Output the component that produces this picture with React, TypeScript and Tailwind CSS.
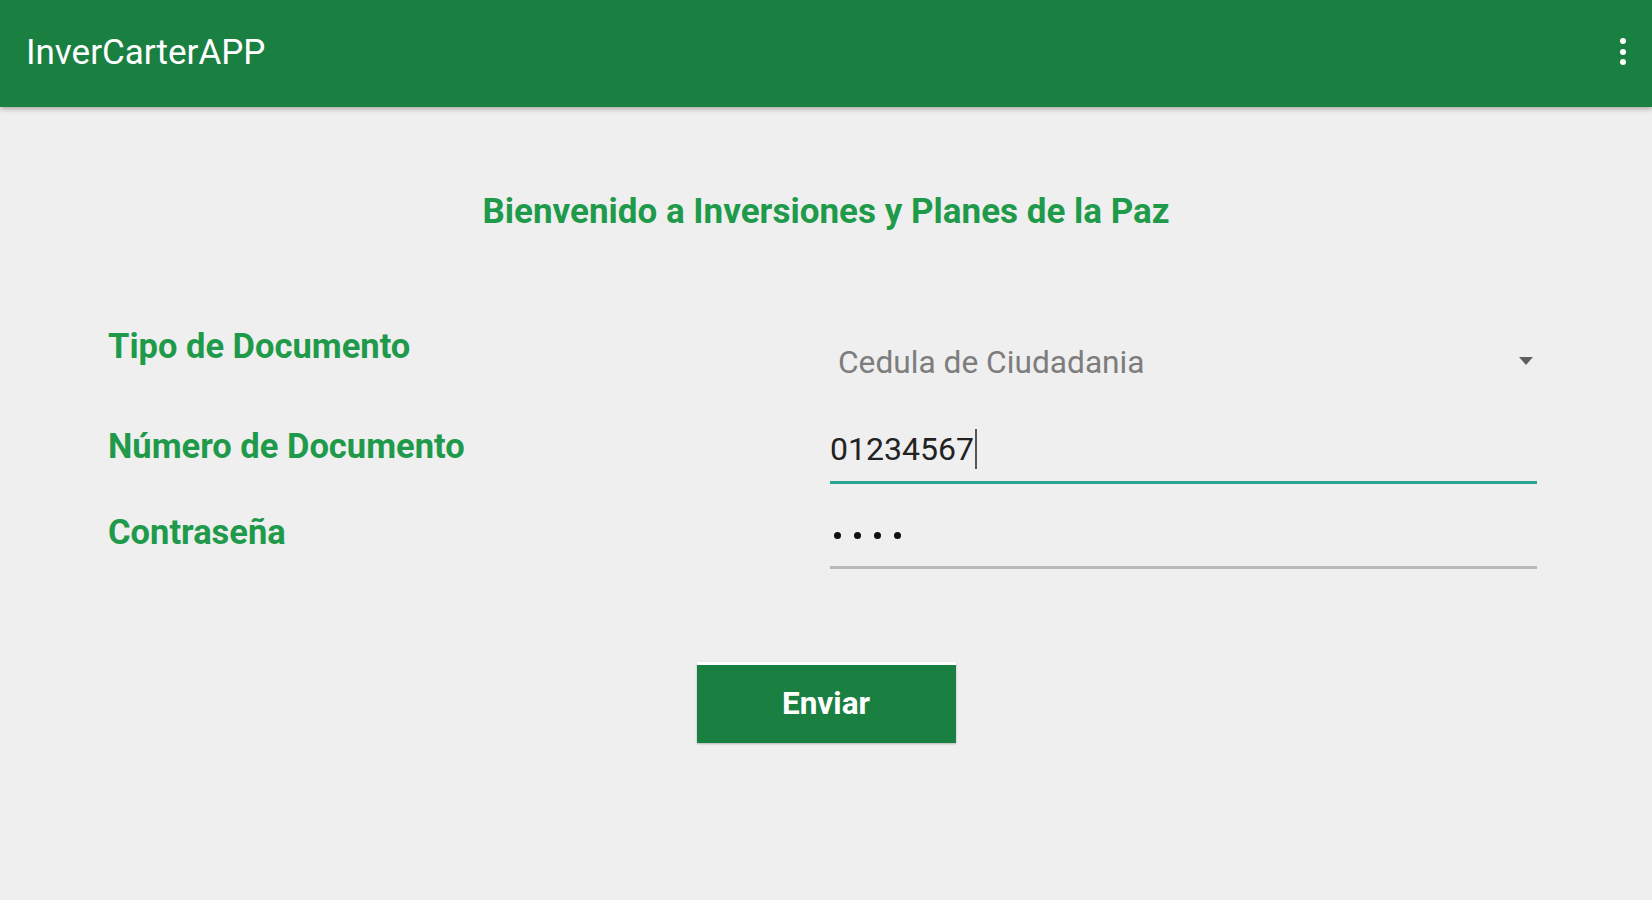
import React from 'react';

const font = 'font-["Roboto","Liberation_Sans",sans-serif]';

function Header() {
  return (
    <header className="h-[107px] bg-[#198042] flex items-center justify-between pl-[26px] pr-[26px] pb-[4px] shadow-[0_2px_5px_rgba(0,0,0,0.3)] relative z-10">
      <h1 className="text-[35px] leading-[40px] mt-[3px] text-white">InverCarterAPP</h1>
      <div className="flex flex-col gap-[4.5px]">
        <span className="w-[6px] h-[6px] rounded-full bg-white" />
        <span className="w-[6px] h-[6px] rounded-full bg-white" />
        <span className="w-[6px] h-[6px] rounded-full bg-white" />
      </div>
    </header>
  );
}

function Label({ children }: { children: React.ReactNode }) {
  return <div className="text-[34.5px] leading-[40px] font-bold text-[#1f9a4b]">{children}</div>;
}

export default function App() {
  return (
    <div className={`${font} min-h-[900px] bg-[#efefef]`}>
      <Header />

      <main className="pt-[85px]">
        <h2 className="text-center text-[35px] leading-[40px] font-bold text-[#1f9a4b]">
          Bienvenido a Inversiones y Planes de la Paz
        </h2>

        <div className="mt-[94px] pl-[108px] pr-[115px]">
          {/* Tipo de documento */}
          <div className="grid grid-cols-[722px_1fr] h-[100px]">
            <Label>Tipo de Documento</Label>
            <div className="pt-[17px] flex items-start justify-between pl-[8px] pr-[4px]">
              <span className="text-[31.7px] leading-[40px] text-[#7d7d7d]">Cedula de Ciudadania</span>
              <svg width="14" height="9" viewBox="0 0 14 9" className="mt-[14px]">
                <path d="M0 0 L14 0 L7 8 Z" fill="#5f5f5f" />
              </svg>
            </div>
          </div>

          {/* Numero de documento */}
          <div className="grid grid-cols-[722px_1fr]">
            <Label>Número de Documento</Label>
            <div className="pt-[3px] pb-[12px] border-b-[3px] border-[#2aa594]">
              <div className="flex items-center h-[40px]">
                <span className="text-[32px] leading-[40px] text-[#222]">01234567</span>
                <span className="w-[2px] h-[40px] bg-[#555] ml-[1px]" />
              </div>
            </div>
          </div>

          {/* Contrasena */}
          <div className="grid grid-cols-[722px_1fr] mt-[28px]">
            <Label>Contraseña</Label>
            <div className="pt-[3px] pb-[11px] border-b-[3px] border-[#b9b9b9]">
              <div className="h-[40px] flex items-center gap-[13px] pl-[4px]">
                <span className="w-[7px] h-[7px] rounded-full bg-[#111]" />
                <span className="w-[7px] h-[7px] rounded-full bg-[#111]" />
                <span className="w-[7px] h-[7px] rounded-full bg-[#111]" />
                <span className="w-[7px] h-[7px] rounded-full bg-[#111]" />
              </div>
            </div>
          </div>
        </div>

        <div className="flex justify-center mt-[93px]">
          <button className="w-[259px] h-[81px] bg-[#198042] border-t-[3px] border-white text-white text-[31.5px] font-bold shadow-[0_1px_2px_rgba(0,0,0,0.25)]">
            Enviar
          </button>
        </div>
      </main>
    </div>
  );
}
